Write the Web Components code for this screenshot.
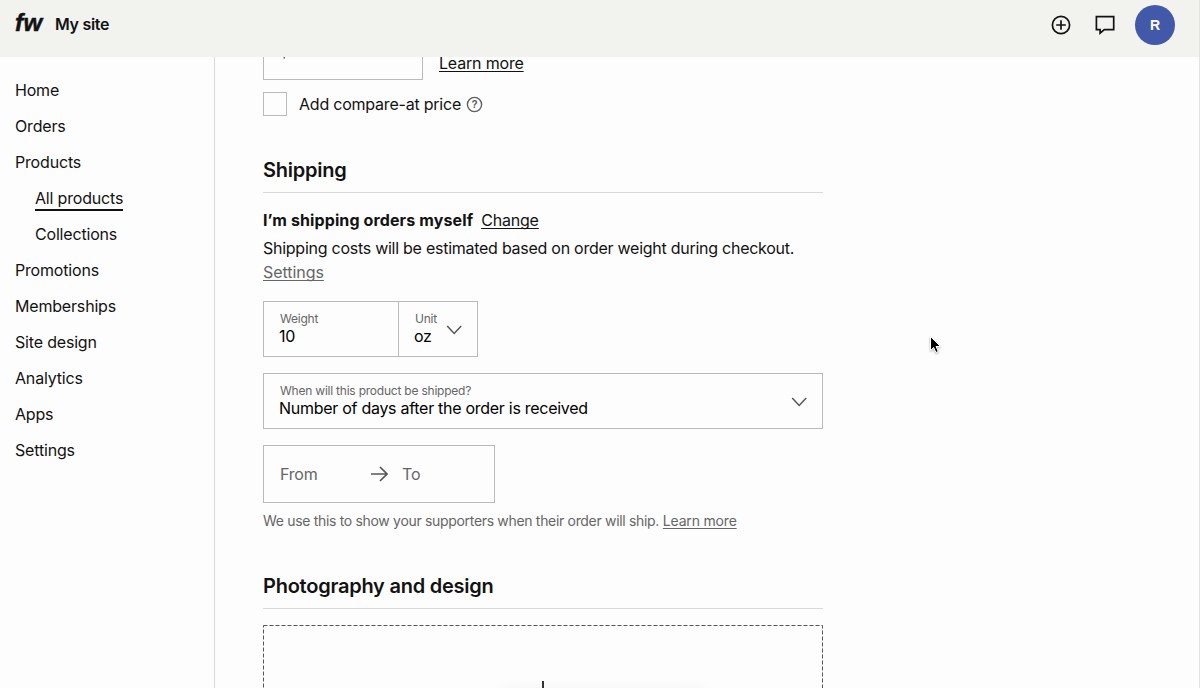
<!DOCTYPE html>
<html lang="en">
<head>
<meta charset="utf-8">
<title>My site</title>
<style>
  html, body {
    height: 100%;
  }

  body {
    margin: 0;
    overflow: hidden;
    background: #fdfdfd;
    color: #121212;
    font: 16px/24px Inter, "Liberation Sans", Arial, sans-serif;
    letter-spacing: -0.18px;
  }
</style>
</head>
<body>
<fw-app>
  <fw-topbar slot="topbar" site="My site" initial="R"></fw-topbar>

  <fw-sidebar slot="sidebar">
    <fw-nav-item>Home</fw-nav-item>
    <fw-nav-item>Orders</fw-nav-item>
    <fw-nav-item>Products</fw-nav-item>
    <fw-nav-item sub active>All products</fw-nav-item>
    <fw-nav-item sub>Collections</fw-nav-item>
    <fw-nav-item>Promotions</fw-nav-item>
    <fw-nav-item>Memberships</fw-nav-item>
    <fw-nav-item>Site design</fw-nav-item>
    <fw-nav-item>Analytics</fw-nav-item>
    <fw-nav-item>Apps</fw-nav-item>
    <fw-nav-item>Settings</fw-nav-item>
  </fw-sidebar>

  <fw-price>
    <fw-field slot="field" value="$10.00" style="width: 160px"></fw-field>
    <fw-link slot="link">Learn more</fw-link>
  </fw-price>
  <fw-checkbox>Add compare-at price</fw-checkbox>

  <fw-section heading="Shipping">
    <fw-shipping></fw-shipping>
  </fw-section>

  <fw-section heading="Photography and design">
    <fw-dropzone></fw-dropzone>
  </fw-section>
</fw-app>
<fw-pointer></fw-pointer>

<script>
class FwElement extends HTMLElement {
  connectedCallback() {
    if (!this.shadowRoot) {
      this.attachShadow({ mode: "open" });
    }

    this.shadowRoot.innerHTML = this.template();
  }

  attr(name, fallback = "") {
    return this.getAttribute(name) || fallback;
  }
}

class FwApp extends FwElement {
  template() {
    return `
      <style>
        :host {
          display: grid;
          grid-template: 57px minmax(0, 1fr) / 215px 1fr;
          height: 100vh;
          box-sizing: border-box;
          border-right: 1px solid #e3e3e1;
        }

        header {
          grid-column: 1 / -1;
        }

        main {
          overflow: hidden;
          padding-left: 48px;
        }

        /* form is scrolled a little way under the top bar */
        .form {
          width: 560px;
          margin-top: -33px;
        }
      </style>

      <header><slot name="topbar"></slot></header>
      <slot name="sidebar"></slot>
      <main><div class="form"><slot></slot></div></main>
    `;
  }
}

class FwTopbar extends FwElement {
  template() {
    return `
      <style>
        :host {
          display: flex;
          align-items: center;
          height: 57px;
          box-sizing: border-box;
          padding: 0 24px 7px 15px;
          background: #f2f3ee;
        }

        .logo {
          width: 28px;
          margin-top: -4px;
          font: italic 700 24px/24px "Liberation Sans", sans-serif;
          letter-spacing: 0.5px;
          -webkit-text-stroke: 0.5px #121212;
        }

        .site {
          margin: -2px 0 0 12px;
          font-weight: 600;
          letter-spacing: -0.3px;
        }

        .actions {
          display: flex;
          align-items: center;
          gap: 20px;
          margin-left: auto;
        }

        svg {
          display: block;
          fill: none;
          stroke: #121212;
          stroke-width: 1.7;
        }

        .avatar {
          width: 40px;
          border-radius: 50%;
          background: #4258a9;
          color: #fff;
          font: 700 14px/40px "Liberation Sans", sans-serif;
          text-align: center;
          margin-left: -2px;
        }
      </style>

      <div class="logo">fw</div>
      <div class="site">${this.attr("site")}</div>
      <div class="actions">
        <svg width="24" height="24" viewBox="0 0 24 24">
          <circle cx="12" cy="12" r="8.6"/>
          <path d="M12 7.2v9.6M7.2 12h9.6"/>
        </svg>
        <svg width="24" height="24" viewBox="0 0 24 24">
          <path d="M3.4 3.7h17.3v13h-9.4l-4.2 3.4v-3.4H3.4z"/>
        </svg>
        <div class="avatar">${this.attr("initial")}</div>
      </div>
    `;
  }
}

class FwSidebar extends FwElement {
  template() {
    return `
      <style>
        :host {
          display: flex;
          flex-direction: column;
          align-items: flex-start;
          gap: 12px;
          box-sizing: border-box;
          padding: 21px 0 0 15px;
          border-right: 1px solid #d9d9d9;
        }
      </style>

      <slot></slot>
    `;
  }
}

class FwNavItem extends FwElement {
  template() {
    return `
      <style>
        :host {
          display: block;
          height: 24px;
        }

        :host([sub]) {
          margin-left: 20px;
        }

        :host([active]) span {
          display: block;
          height: 23px;
          border-bottom: 2px solid #121212;
        }
      </style>

      <span><slot></slot></span>
    `;
  }
}

class FwLink extends FwElement {
  template() {
    return `
      <style>
        :host {
          display: inline;
          text-decoration: underline;
          text-decoration-thickness: 1px;
          text-underline-offset: 2px;
          text-decoration-skip-ink: none;
        }

        :host([muted]) {
          color: #666;
          letter-spacing: -0.05px;
        }
      </style>

      <slot></slot>
    `;
  }
}

class FwPrice extends FwElement {
  template() {
    return `
      <style>
        :host {
          display: flex;
          gap: 16px;
        }

        .link {
          padding-top: 27px;
        }
      </style>

      <slot name="field"></slot>
      <div class="link"><slot name="link"></slot></div>
    `;
  }
}

class FwField extends FwElement {
  template() {
    const label = this.attr("label");
    const chevron = this.hasAttribute("select")
      ? `<svg width="16" height="10" viewBox="0 0 16 10"><path d="M1.2 1l7 7.4L15.2 1"/></svg>`
      : "";

    return `
      <style>
        :host {
          display: flex;
          align-items: center;
          justify-content: space-between;
          height: 56px;
          box-sizing: border-box;
          padding: 0 15px;
          border: 1px solid #bababa;
        }

        .text {
          padding-bottom: 2px;
        }

        .label {
          padding: 1px 0 0 1px;
          color: #666;
          font-size: 12px;
          line-height: 16px;
          letter-spacing: -0.22px;
        }

        .value {
          line-height: 20px;
          letter-spacing: -0.28px;
          color: #000;
        }

        .label + .value {
          margin-top: -1px;
        }

        svg {
          margin-top: 1px;
          fill: none;
          stroke: #555;
          stroke-width: 1.5;
        }
      </style>

      <div class="text">
        ${label ? `<div class="label">${label}</div>` : ""}
        <div class="value">${this.attr("value")}</div>
      </div>
      ${chevron}
    `;
  }
}

class FwCheckbox extends FwElement {
  template() {
    return `
      <style>
        :host {
          display: flex;
          align-items: center;
          height: 24px;
          margin-top: 12px;
          letter-spacing: -0.22px;
        }

        .box {
          width: 24px;
          height: 24px;
          box-sizing: border-box;
          border: 1px solid #bababa;
          margin-right: 12px;
        }

        svg {
          margin-left: 5px;
        }

        text {
          font: 700 10px "Liberation Sans", sans-serif;
          letter-spacing: 0;
          fill: #555;
        }
      </style>

      <span class="box"></span>
      <span><slot></slot></span>
      <svg width="17" height="17" viewBox="0 0 17 17">
        <circle cx="8.5" cy="8.5" r="7.1" fill="none" stroke="#606060" stroke-width="1.4"/>
        <text x="8.5" y="12" text-anchor="middle">?</text>
      </svg>
    `;
  }
}

class FwSection extends FwElement {
  template() {
    return `
      <style>
        :host {
          display: block;
          padding-top: 40px;
        }

        h2 {
          margin: 0;
          padding-bottom: 8px;
          border-bottom: 1px solid #d9d9d9;
          font-size: 20px;
          font-weight: 600;
          line-height: 28px;
          letter-spacing: -0.24px;
        }
      </style>

      <h2>${this.attr("heading")}</h2>
      <slot></slot>
    `;
  }
}

class FwShipping extends FwElement {
  template() {
    return `
      <style>
        :host {
          display: block;
          padding-top: 15px;
        }

        .method {
          display: flex;
          gap: 8px;
          margin-bottom: 4px;
        }

        b {
          letter-spacing: 0.12px;
        }

        .about {
          letter-spacing: -0.26px;
        }

        .weight {
          display: flex;
          margin: 17px 0 16px;
        }

        .weight fw-field + fw-field {
          margin-left: -1px;
        }

        .range {
          display: flex;
          align-items: center;
          width: 232px;
          height: 58px;
          box-sizing: border-box;
          margin-top: 16px;
          padding: 0 16px;
          border: 1px solid #bababa;
          color: #666;
        }

        .from {
          width: 91px;
        }

        svg {
          margin-right: 14px;
          fill: none;
          stroke: #555;
          stroke-width: 1.6;
        }

        .hint {
          margin: 8px 0 1px;
          color: #666;
          font-size: 14px;
          line-height: 20px;
        }

        .hint span {
          letter-spacing: -0.32px;
        }
      </style>

      <div class="method"><b>I’m shipping orders myself</b><fw-link>Change</fw-link></div>
      <div class="about">Shipping costs will be estimated based on order weight during checkout.</div>
      <fw-link muted>Settings</fw-link>

      <div class="weight">
        <fw-field label="Weight" value="10" style="width: 136px"></fw-field>
        <fw-field select label="Unit" value="oz" style="width: 80px"></fw-field>
      </div>

      <fw-field select label="When will this product be shipped?" value="Number of days after the order is received"></fw-field>

      <div class="range">
        <span class="from">From</span>
        <svg width="17" height="16" viewBox="0 0 17 16"><path d="M0 8h15.6M9 1l7 7-7 7"/></svg>
        <span>To</span>
      </div>
      <div class="hint"><span>We use this to show your supporters when their order will ship.</span> <fw-link>Learn more</fw-link></div>
    `;
  }
}

class FwDropzone extends FwElement {
  template() {
    return `
      <style>
        :host {
          display: block;
          position: relative;
          margin-top: 16px;
        }

        svg {
          display: block;
        }

        /* floating save bar, only the top of its shadow shows */
        .bar {
          position: absolute;
          left: 237px;
          top: 71px;
          width: 205px;
          height: 40px;
          box-shadow: 0 0 20px rgba(0, 0, 0, .1);
        }
      </style>

      <svg width="560" height="160" fill="none">
        <rect x=".5" y=".5" width="559" height="159" stroke="#555" stroke-dasharray="4 2"/>
        <path d="M280 56v24M268 68h24" stroke="#333" stroke-width="2"/>
      </svg>
      <div class="bar"></div>
    `;
  }
}

class FwPointer extends FwElement {
  template() {
    return `
      <style>
        :host {
          position: absolute;
          left: 929px;
          top: 335px;
          filter: drop-shadow(0 1px 1px rgba(0, 0, 0, .3));
        }

        svg {
          display: block;
        }
      </style>

      <svg width="14" height="20" viewBox="0 0 14 20">
        <path d="M1.5 1.5v14l3.2-3 2.2 5 2.4-1-2.2-5h4.4z" stroke="#fff" fill="#000"/>
      </svg>
    `;
  }
}

customElements.define("fw-app", FwApp);
customElements.define("fw-topbar", FwTopbar);
customElements.define("fw-sidebar", FwSidebar);
customElements.define("fw-nav-item", FwNavItem);
customElements.define("fw-link", FwLink);
customElements.define("fw-price", FwPrice);
customElements.define("fw-field", FwField);
customElements.define("fw-checkbox", FwCheckbox);
customElements.define("fw-section", FwSection);
customElements.define("fw-shipping", FwShipping);
customElements.define("fw-dropzone", FwDropzone);
customElements.define("fw-pointer", FwPointer);
</script>
</body>
</html>
